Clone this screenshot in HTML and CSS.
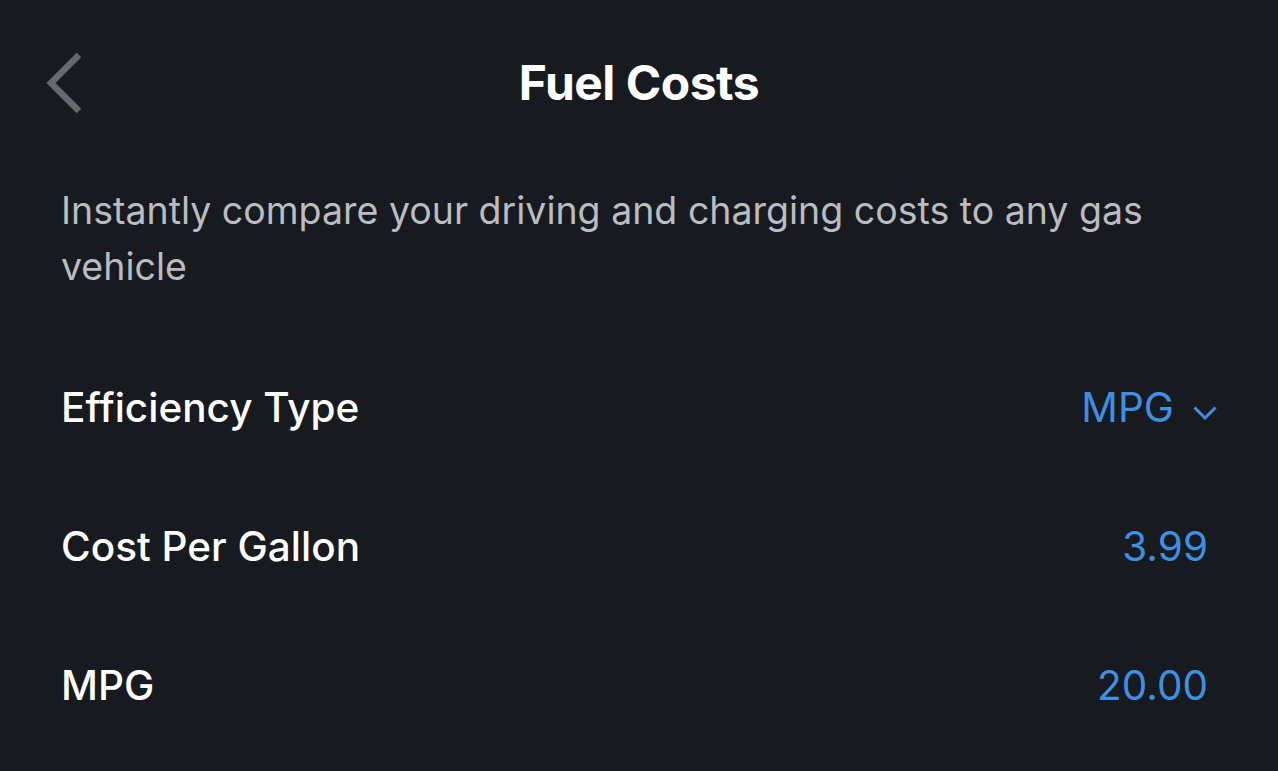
FILE: index.html
```html
<!DOCTYPE html>
<html lang="en">
<head>
<meta charset="utf-8">
<title>Fuel Costs</title>
<link rel="stylesheet" href="styles.css">
</head>
<body>
<div class="screen">
  <header class="topbar">
    <button class="back" aria-label="Back">
      <svg width="40" height="62" viewBox="0 0 40 62"><path d="M34 3 L6 31 L34 59" fill="none" stroke="#66696d" stroke-width="6.5"/></svg>
    </button>
    <h1 class="title">Fuel Costs</h1>
  </header>
  <p class="desc">Instantly compare your driving and charging costs to any gas vehicle</p>
  <div class="rows">
    <div class="row">
      <span class="label">Efficiency Type</span>
      <span class="value select">MPG
        <svg class="caret" width="24" height="14" viewBox="0 0 24 14"><path d="M1.5 1.5 L12 12 L22.5 1.5" fill="none" stroke="#3f8fe3" stroke-width="3"/></svg>
      </span>
    </div>
    <div class="row">
      <span class="label">Cost Per Gallon</span>
      <span class="value">3.99</span>
    </div>
    <div class="row">
      <span class="label">MPG</span>
      <span class="value">20.00</span>
    </div>
  </div>
</div>
</body>
</html>
```
FILE: styles.css
```css
html, body {
  margin: 0;
  padding: 0;
  background: #171a1e;
}
body {
  font-family: Inter, "Noto Sans", "Liberation Sans", sans-serif;
  color: #ffffff;
  width: 1278px;
  height: 771px;
  overflow: hidden;
}
.screen {
  padding: 0 61px;
}
.topbar {
  position: relative;
  height: 183px;
  display: flex;
  justify-content: center;
}
.back {
  position: absolute;
  left: -16px;
  top: 52px;
  background: none;
  border: 0;
  padding: 0;
  width: 40px;
  height: 62px;
}
.back svg { display: block; }
.title {
  margin: 0;
  padding-top: 55px;
  font-size: 48px;
  font-weight: 700;
  line-height: 56px;
  letter-spacing: -0.5px;
}
.desc {
  margin: 0;
  color: #b9bcc0;
  font-size: 37.5px;
  line-height: 56px;
  width: 1110px;
}
.rows {
  margin-top: 43px;
  display: flex;
  flex-direction: column;
}
.row {
  display: flex;
  justify-content: space-between;
  align-items: center;
  height: 139px;
}
.label {
  font-size: 40.5px;
  font-weight: 500;
}
.value {
  font-size: 40.5px;
  color: #3f8fe3;
  padding-right: 9px;
}
.value.select {
  padding-right: 0;
  display: flex;
  align-items: center;
  gap: 19px;
}
.caret {
  display: block;
  margin-top: 10px;
}
```
